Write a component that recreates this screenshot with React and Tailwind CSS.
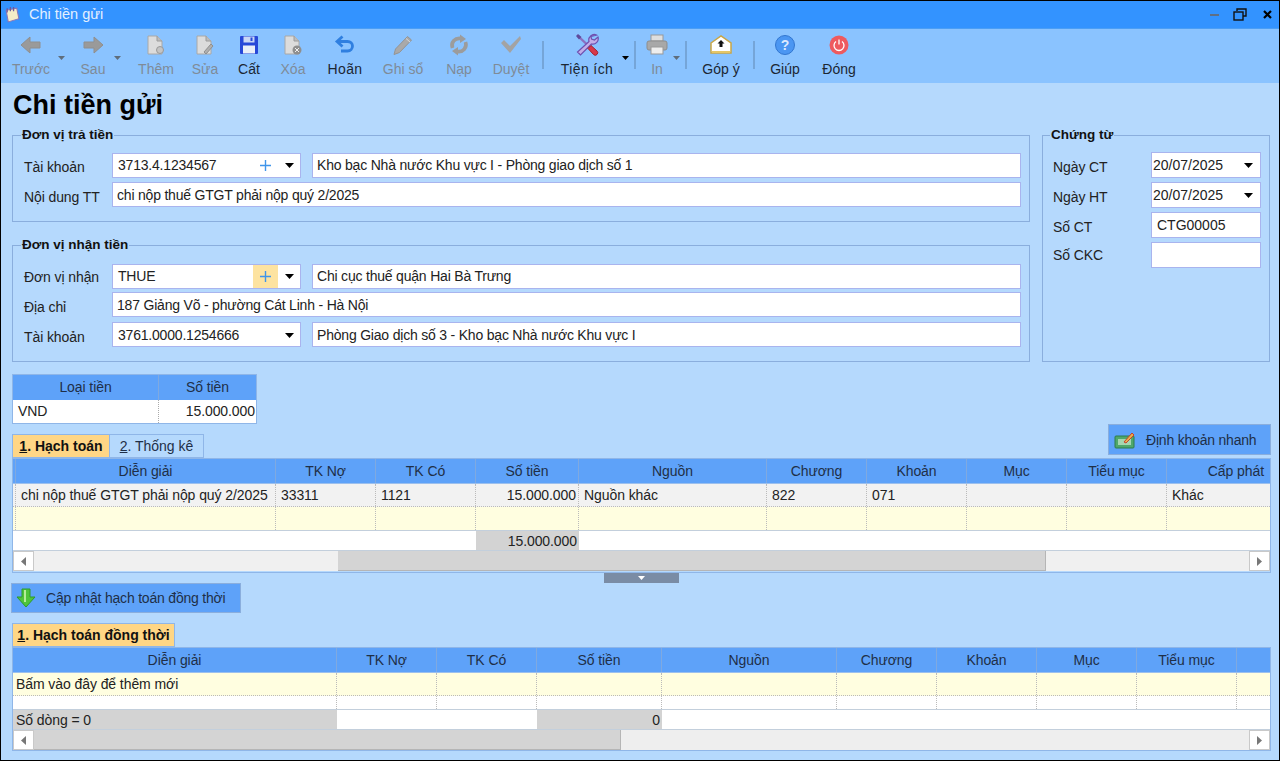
import React from 'react'

const FONT = "font-['Liberation_Sans',Arial,sans-serif]"

function CaretDown({ color = '#000', w = 9, h = 5 }) {
  return (
    <svg width={w} height={h} viewBox="0 0 9 5" preserveAspectRatio="none">
      <path d="M0 0h9L4.500 5z" fill={color} />
    </svg>
  )
}

function IconBack() {
  return (
    <svg width="22" height="20" viewBox="0 0 22 20">
      <path d="M1 10 10 2v5h10v6H10v5z" fill="#9a9a9a" stroke="#8f8f8f" />
    </svg>
  )
}

function IconForward() {
  return (
    <svg width="22" height="20" viewBox="0 0 22 20">
      <path d="M21 10 12 2v5H2v6h10v5z" fill="#9a9a9a" stroke="#8f8f8f" />
    </svg>
  )
}

function PageBase({ children }) {
  return (
    <svg width="22" height="22" viewBox="0 0 22 22">
      <path d="M3 2h9l5 5v13H3z" fill="#dcdcdc" stroke="#a8a8a8" />
      <path d="M12 2v5h5" fill="#bdbdbd" stroke="#9c9c9c" />
      {children}
    </svg>
  )
}

function IconSave() {
  return (
    <svg width="20" height="20" viewBox="0 0 20 20">
      <rect x="1" y="1" width="18" height="18" rx="1" fill="#2748d8" />
      <rect x="4.500" y="1.500" width="11" height="6" fill="#c9d6f5" />
      <rect x="11.500" y="2.500" width="2" height="3.500" fill="#2748d8" />
      <rect x="4" y="10.500" width="12" height="8" fill="#e9eef8" />
    </svg>
  )
}

function IconUndo() {
  return (
    <svg width="22" height="20" viewBox="0 0 22 20">
      <path d="M8.500 1.500 3 6.500l5.500 5" fill="none" stroke="#2f7fe0" strokeWidth="2.800" />
      <path d="M3.500 6.500h10c3 0 5 2 5 4.500s-2 5-5 5H7" fill="none" stroke="#2f7fe0" strokeWidth="2.800" />
    </svg>
  )
}

function IconPencil() {
  return (
    <svg width="22" height="22" viewBox="0 0 22 22">
      <path d="M3.500 15 15.500 2.500l4 3.500L7.500 18.500 2 20.500z" fill="#a9a9a9" stroke="#949494" />
      <path d="M14 4.500 18 8" stroke="#d8d8d8" />
    </svg>
  )
}

function IconReload() {
  return (
    <svg width="22" height="22" viewBox="0 0 22 22">
      <path d="M4.500 14C2.500 8.500 7 3.500 13 4.500" fill="none" stroke="#9c9c9c" strokeWidth="3.600" />
      <path d="M12 0.500 18 5l-6 4z" fill="#9c9c9c" />
      <path d="M17.500 8c2 5.500-2.500 10.500-8.500 9.500" fill="none" stroke="#9c9c9c" strokeWidth="3.600" />
      <path d="M10 21.500 4 17l6-4z" fill="#9c9c9c" />
    </svg>
  )
}

function IconCheck() {
  return (
    <svg width="22" height="20" viewBox="0 0 22 20">
      <path d="M1 8 4 5l6 6L20 1l1 3L10 18z" fill="#a3a3a3" />
    </svg>
  )
}

function IconTools() {
  return (
    <svg width="24" height="24" viewBox="0 0 24 24">
      <path d="M3 3 20 19" stroke="#8b6fc0" strokeWidth="2.400" />
      <path d="M1 3 3 1l3.500 3-2.500 2.500z" fill="#5f4a9c" />
      <path d="M21.500 2a5.500 5.500 0 0 0-7.500 6.500L2.500 19l3 3 11-11a5.500 5.500 0 0 0 6.500-7l-3.500 3-3-1-.5-2.500z" fill="#c3aee8" stroke="#6d4fb0" strokeWidth="1.200" />
      <path d="M13 15.500 18.500 21.500a2.200 2.200 0 0 0 3.500-3.500L16 12.500z" fill="#d8384a" stroke="#a32030" />
    </svg>
  )
}

function IconPrinter() {
  return (
    <svg width="22" height="22" viewBox="0 0 22 22">
      <rect x="5" y="1" width="12" height="6" fill="#dedede" stroke="#999" />
      <rect x="1" y="7" width="20" height="9" rx="2" fill="#a8a8a8" stroke="#8d8d8d" />
      <rect x="5" y="13" width="12" height="7" fill="#eee" stroke="#999" />
    </svg>
  )
}

function IconMail() {
  return (
    <svg width="22" height="20" viewBox="0 0 22 20">
      <path d="M1 8 11 1l10 7v10H1z" fill="#fff" stroke="#c9a646" strokeWidth="1.500" />
      <path d="M11 5l3.500 3.500H12.500V12h-3V8.500H7.500z" fill="#111" />
      <rect x="2" y="16" width="18" height="2" fill="#e5c667" />
    </svg>
  )
}

function IconHelp() {
  return (
    <div className="w-[20px] h-[20px] rounded-full bg-[#4b96f2] border border-[#3276d0] text-[#dbe9ff] text-[14px] font-bold flex items-center justify-center leading-none">
      ?
    </div>
  )
}

function IconPower() {
  return (
    <svg width="20" height="20" viewBox="0 0 20 20">
      <circle cx="10" cy="10" r="9.500" fill="#ee5a5f" />
      <path d="M7 6.500a5 5 0 1 0 6 0" fill="none" stroke="#fff" strokeWidth="1.300" />
      <path d="M10 4.500v5" stroke="#fff" strokeWidth="1.300" />
    </svg>
  )
}

function IconPlus() {
  return (
    <svg width="11" height="11" viewBox="0 0 11 11">
      <path d="M4.800 0h1.400v11H4.800zM0 4.800h11v1.400H0z" fill="#3f95ea" />
    </svg>
  )
}

function ToolButton({ icon, label, active, wide, className }) {
  return (
    <div className={`flex flex-col items-center shrink-0 ${className}`}>
      <div className="h-[25px] flex items-center justify-center">{icon}</div>
      <span
        className={`mt-[4px] text-[14px] leading-[16px] whitespace-nowrap ${active ? 'text-[#1c2733]' : 'text-[#7f8b98]'} ${wide ? 'tracking-[0.4px]' : ''}`}
      >
        {label}
      </span>
    </div>
  )
}

function ToolCaret({ color = '#5f6d7c', className }) {
  return (
    <div className={`shrink-0 w-[9px] flex justify-center ${className}`}>
      <CaretDown color={color} w={7} h={4} />
    </div>
  )
}

function ToolSep({ className }) {
  return <div className={`shrink-0 w-[2px] h-[28px] mt-[9px] bg-[#75a5d8] ${className}`} />
}

function Field({ w, children, className = '' }) {
  return (
    <div className={`h-[25px] ${w} shrink-0 bg-white border border-[#a9b4ee] flex items-center text-[14px] tracking-[-0.2px] text-[#222] ${className}`}>
      {children}
    </div>
  )
}

function Combo({ value, plus, hot, className = '' }) {
  return (
    <Field w="w-[189px]" className={`pl-[5px] ${className}`}>
      <span className="flex-1">{value}</span>
      {plus && (
        <span className={`w-[25px] h-[23px] flex items-center justify-center ${hot ? 'bg-[#fde3a0]' : ''}`}>
          <IconPlus />
        </span>
      )}
      <span className="w-[22px] flex justify-center">
        <CaretDown />
      </span>
    </Field>
  )
}

function FormRow({ label, labelPad, className = '', children }) {
  return (
    <div className={`flex items-center h-[25px] ${className}`}>
      <span className={`w-[88px] shrink-0 text-[14px] tracking-[-0.1px] text-[#222] ${labelPad}`}>{label}</span>
      {children}
    </div>
  )
}

function Group({ title, className, legendClass, children }) {
  return (
    <fieldset className={`border border-[#8aaedd] ${className}`}>
      <legend className={`px-[1px] text-[13.500px] leading-[16px] font-bold text-[#111] ${legendClass}`}>{title}</legend>
      {children}
    </fieldset>
  )
}

const grid1Cols = [
  ['w-[3px]', ''],
  ['w-[260px]', 'Diễn giải'],
  ['w-[100px]', 'TK Nợ'],
  ['w-[100px]', 'TK Có'],
  ['w-[103px]', 'Số tiền'],
  ['w-[188px]', 'Nguồn'],
  ['w-[100px]', 'Chương'],
  ['w-[100px]', 'Khoản'],
  ['w-[100px]', 'Mục'],
  ['w-[100px]', 'Tiểu mục'],
  ['w-[103px]', 'Cấp phát'],
]

const grid1Row = ['', 'chi nộp thuế GTGT phải nộp quý 2/2025', '33311', '1121', '15.000.000', 'Nguồn khác', '822', '071', '', '', 'Khác']

const grid2Cols = [
  ['w-[324px]', 'Diễn giải'],
  ['w-[100px]', 'TK Nợ'],
  ['w-[100px]', 'TK Có'],
  ['w-[125px]', 'Số tiền'],
  ['w-[175px]', 'Nguồn'],
  ['w-[100px]', 'Chương'],
  ['w-[100px]', 'Khoản'],
  ['w-[100px]', 'Mục'],
  ['w-[100px]', 'Tiểu mục'],
  ['w-[33px]', ''],
]

function HeaderRow({ cols, endAlignLast }) {
  return (
    <div className="flex h-[25px] bg-[#5ea2f9] border-b border-[#9cc0ee]">
      {cols.map(([w, label], i) => (
        <div
          key={i}
          className={`${w} shrink-0 flex items-center pt-[1px] whitespace-nowrap text-[#1f2f47] border-r border-[#7fa9e0] last:border-r-0 ${
            endAlignLast && i === cols.length - 1 ? 'justify-end pr-[6px]' : 'justify-center'
          }`}
        >
          {label}
        </div>
      ))}
    </div>
  )
}

function ScrollBar({ before, thumb, track }) {
  return (
    <div className={`flex h-[21px] ${track} border-t border-[#c3cfdc]`}>
      <div className="w-[21px] shrink-0 bg-white border border-[#c9c9c9] flex items-center justify-center">
        <svg width="5" height="9" viewBox="0 0 5 9"><path d="M5 0v9L0 4.500z" fill="#777" /></svg>
      </div>
      <div className={`${before} shrink-0`} />
      <div className={`${thumb} shrink-0 bg-[#d4d4d4] border-r border-b border-[#b5b5b5]`} />
      <div className="flex-1" />
      <div className="w-[21px] shrink-0 bg-white border border-[#c9c9c9] flex items-center justify-center">
        <svg width="5" height="9" viewBox="0 0 5 9"><path d="M0 0v9l5-4.500z" fill="#777" /></svg>
      </div>
    </div>
  )
}

function ActionButton({ icon, label, className }) {
  return (
    <div className={`flex items-center bg-[#5ea2f9] border border-[#8aaedd] text-[14px] tracking-[-0.2px] text-[#1f2f47] whitespace-nowrap ${className}`}>
      {icon}
      <span className="pt-[1px]">{label}</span>
    </div>
  )
}

function App() {
  return (
    <div className={`${FONT} w-[1280px] h-[761px] overflow-hidden flex flex-col border border-black bg-[#b5d9fd] text-[14px]`}>
      {/* Title bar */}
      <div className="h-[28px] shrink-0 bg-[#3393ff] flex items-center pl-[4px] border-b border-[#4b9ef5]">
        <svg width="15" height="17" viewBox="0 0 14 16">
          <path d="M1 4 11 2l2 10-10 3z" fill="#f5edc8" stroke="#8a76b8" />
          <path d="M2 2v4M5 1v4M8 1v4" stroke="#6d5a9c" strokeWidth="1.200" />
        </svg>
        <span className="ml-[9px] pt-[1px] text-[14.500px] text-[#e3f0ff]">Chi tiền gửi</span>
        <div className="ml-auto flex items-center">
          <div className="w-[9px] h-[2px] bg-[#5f6f85]" />
          <svg className="ml-[14px]" width="14" height="13" viewBox="0 0 14 13">
            <path d="M4 3V1h9v7h-3" fill="none" stroke="#111" strokeWidth="1.400" />
            <rect x="1" y="4" width="9" height="8" fill="none" stroke="#111" strokeWidth="1.400" />
          </svg>
          <svg className="ml-[16px] mr-[7px]" width="9" height="9" viewBox="0 0 9 9">
            <path d="M1 1l7 7M8 1 1 8" stroke="#000" strokeWidth="2.200" />
          </svg>
        </div>
      </div>

      {/* Toolbar */}
      <div className="h-[54px] shrink-0 bg-[#8ac3ff] flex items-start pt-[3px] pl-[5px]">
        <ToolButton className="w-[50px]" icon={<IconBack />} label="Trước" />
        <ToolCaret className="mt-[24px] ml-[1px]" />
        <ToolButton className="w-[40px] ml-[7px]" icon={<IconForward />} label="Sau" />
        <ToolCaret className="mt-[24px]" />
        <ToolButton className="w-[40px] ml-[14px]" icon={<PageBase><circle cx="15" cy="16" r="3.500" fill="#c4c4c4" stroke="#999" /></PageBase>} label="Thêm" />
        <ToolButton className="w-[40px] ml-[9px]" icon={<PageBase><path d="M10 18 17 10l2 2-7 8z" fill="#b0b0b0" stroke="#8f8f8f" /></PageBase>} label="Sửa" />
        <ToolButton className="w-[40px] ml-[4px]" icon={<IconSave />} label="Cất" active />
        <ToolButton className="w-[40px] ml-[4px]" icon={<PageBase><circle cx="15" cy="16" r="4.500" fill="#8f8f8f" /><path d="M13 14l4 4M17 14l-4 4" stroke="#eee" /></PageBase>} label="Xóa" />
        <ToolButton className="w-[40px] ml-[12px]" icon={<IconUndo />} label="Hoãn" active wide />
        <ToolButton className="w-[40px] ml-[18px]" icon={<IconPencil />} label="Ghi sổ" />
        <ToolButton className="w-[40px] ml-[16px]" icon={<IconReload />} label="Nạp" />
        <ToolButton className="w-[40px] ml-[12px]" icon={<IconCheck />} label="Duyệt" />
        <ToolSep className="ml-[11px]" />
        <ToolButton className="w-[50px] ml-[18px]" icon={<IconTools />} label="Tiện ích" active wide />
        <ToolCaret color="#000" className="mt-[24px] ml-[9px]" />
        <ToolSep className="ml-[4px]" />
        <ToolButton className="w-[24px] ml-[9px]" icon={<IconPrinter />} label="In" />
        <ToolCaret className="mt-[24px] ml-[3px]" />
        <ToolSep className="ml-[4px]" />
        <ToolButton className="w-[40px] ml-[14px]" icon={<IconMail />} label="Góp ý" active />
        <ToolSep className="ml-[12px]" />
        <ToolButton className="w-[40px] ml-[10px]" icon={<IconHelp />} label="Giúp" active />
        <ToolButton className="w-[40px] ml-[14px]" icon={<IconPower />} label="Đóng" active />
      </div>

      {/* Content */}
      <div className="flex-1 flex flex-col pl-[11px] pr-[8px]">
        <h1 className="h-[44px] pl-[1px] pt-[7px] text-[27px] leading-[30px] font-bold text-[#000]">Chi tiền gửi</h1>

        <div className="flex">
          <div className="w-[1018px] shrink-0">
            <Group title="Đơn vị trả tiền" legendClass="-ml-[3px]" className="h-[95px] pl-[11px] pt-[10px]">
              <FormRow label="Tài khoản" labelPad="pt-[4px]" className="mb-[4px]">
                <Combo value="3713.4.1234567" plus />
                <Field w="w-[709px]" className="ml-[11px] pl-[4px]">Kho bạc Nhà nước Khu vực I - Phòng giao dịch số 1</Field>
              </FormRow>
              <FormRow label="Nội dung TT" labelPad="pt-[6px]">
                <Field w="w-[909px]" className="pl-[4px] pt-[2px]">chi nộp thuế GTGT phải nộp quý 2/2025</Field>
              </FormRow>
            </Group>
            <Group title="Đơn vị nhận tiền" legendClass="-ml-[3px]" className="h-[125px] mt-[15px] pl-[11px] pt-[11px]">
              <FormRow label="Đơn vị nhận" labelPad="pt-[2px]" className="mb-[3px]">
                <Combo value="THUE" plus hot />
                <Field w="w-[709px]" className="ml-[11px] pl-[4px]">Chi cục thuế quận Hai Bà Trưng</Field>
              </FormRow>
              <FormRow label="Địa chỉ" labelPad="pt-[6px]" className="mb-[5px]">
                <Field w="w-[909px]" className="pl-[4px] pt-[1px]">187 Giảng Võ - phường Cát Linh - Hà Nội</Field>
              </FormRow>
              <FormRow label="Tài khoản" labelPad="pt-[6px]">
                <Combo value="3761.0000.1254666" className="pt-[2px]" />
                <Field w="w-[709px]" className="ml-[11px] pl-[4px] pt-[2px]">Phòng Giao dịch số 3 - Kho bạc Nhà nước Khu vực I</Field>
              </FormRow>
            </Group>
          </div>

          <Group title="Chứng từ" legendClass="-ml-[3px]" className="w-[228px] h-[235px] ml-[12px] pl-[10px] pt-[9px]">
            {[
              ['Ngày CT', '20/07/2025', true, 'pt-[5px]'],
              ['Ngày HT', '20/07/2025', true, 'pt-[5px]'],
              ['Số CT', 'CTG00005', false, 'pt-[5px]'],
              ['Số CKC', '', false, 'pt-[1px]'],
            ].map(([label, value, drop, pad]) => (
              <div key={label} className="flex items-center h-[26px] mb-[4px]">
                <span className={`w-[98px] shrink-0 text-[14px] tracking-[-0.1px] text-[#222] ${pad}`}>{label}</span>
                <Field w="w-[110px]" className={`h-[26px] ${drop ? 'pl-[1px]' : 'pl-[5px]'}`}>
                  <span className="flex-1 tracking-normal">{value}</span>
                  {drop && <span className="w-[24px] flex justify-center"><CaretDown /></span>}
                </Field>
              </div>
            ))}
          </Group>
        </div>

        {/* Currency */}
        <div className="w-[245px] h-[50px] mt-[12px] border border-[#8fb6e8] shrink-0 tracking-[-0.08px]">
          <div className="flex h-[25px] bg-[#5ea2f9] text-[#1f2f47]">
            <div className="w-[146px] flex items-center justify-center border-r border-[#7fa9e0]">Loại tiền</div>
            <div className="flex-1 flex items-center justify-center">Số tiền</div>
          </div>
          <div className="flex h-[23px] bg-white text-[#222]">
            <div className="w-[146px] pl-[5px] flex items-center border-r border-dotted border-[#aaa]">VND</div>
            <div className="flex-1 pr-[1px] flex items-center justify-end">15.000.000</div>
          </div>
        </div>

        {/* Grid 1 */}
        <div className="flex items-start h-[34px] shrink-0 w-[1259px]">
          <div className="flex mt-[10px] h-[24px] items-stretch">
            <div className="w-[98px] bg-[#ffd685] border border-[#8fb6e8] flex items-center justify-center font-bold text-[#111]">
              <span><span className="underline">1</span>. Hạch toán</span>
            </div>
            <div className="w-[94px] border-y border-r border-[#8fb6e8] flex items-center justify-center text-[#1f2f47]">
              <span><span className="underline">2</span>. Thống kê</span>
            </div>
          </div>
          <ActionButton
            className="ml-auto w-[163px] h-[31px] pl-[5px]"
            label="Định khoản nhanh"
            icon={
              <svg className="mr-[10px]" width="22" height="18" viewBox="0 0 22 18">
                <rect x="1" y="5" width="19" height="12" rx="1" fill="#4fa86b" stroke="#2d7d4c" />
                <rect x="4" y="8" width="13" height="6" fill="#a5d6b0" />
                <path d="M10 11 18 2l2 2-8 8z" fill="#e8b04a" stroke="#c6402e" />
              </svg>
            }
          />
        </div>

        <div className="w-[1259px] h-[115px] shrink-0 border border-[#8fb6e8] tracking-[-0.08px] text-[#222]">
          <HeaderRow cols={grid1Cols} endAlignLast />
          <div className="flex h-[23px] bg-[#f2f2f2] border-b border-dotted border-[#bbb]">
            {grid1Cols.map(([w], i) => (
              <div
                key={i}
                className={`${w} shrink-0 flex items-center pt-[1px] whitespace-nowrap overflow-hidden border-r border-dotted border-[#bbb] last:border-r-0 ${
                  i === 0 ? '' : i === 4 ? 'justify-end pr-[2px]' : 'pl-[5px]'
                }`}
              >
                {grid1Row[i]}
              </div>
            ))}
          </div>
          <div className="flex h-[24px] bg-[#fffee0] border-b border-[#c3cfdc]">
            {grid1Cols.map(([w], i) => (
              <div key={i} className={`${w} shrink-0 border-r border-dotted border-[#bbb] last:border-r-0`} />
            ))}
          </div>
          <div className="flex h-[19px] bg-white">
            <div className="w-[463px] shrink-0" />
            <div className="w-[103px] shrink-0 bg-[#d3d3d3] flex items-center justify-end pr-[2px] pt-[1px]">15.000.000</div>
          </div>
          <ScrollBar track="bg-[#f0f0f0]" before="w-[304px]" thumb="w-[708px]" />
        </div>

        {/* Splitter */}
        <div className="h-[10px] shrink-0 w-[1259px] flex justify-center">
          <div className="w-[75px] h-full bg-[#7a8ca5] flex items-center justify-center">
            <svg width="7" height="4" viewBox="0 0 7 4"><path d="M0 0h7L3.500 4z" fill="#fff" /></svg>
          </div>
        </div>

        <ActionButton
          className="w-[230px] h-[30px] shrink-0 -ml-[1px] pl-[4px]"
          label="Cập nhật hạch toán đồng thời"
          icon={
            <svg className="mr-[10px]" width="20" height="20" viewBox="0 0 20 20">
              <path d="M6 1h8v8h5l-9 10L1 9h5z" fill="#4fc43a" stroke="#2f9a2c" />
              <path d="M8 2h2v12H8z" fill="#b5ec9a" />
            </svg>
          }
        />

        {/* Grid 2 */}
        <div className="mt-[10px] w-[163px] h-[24px] shrink-0 bg-[#ffd685] border border-[#8fb6e8] flex items-center justify-center font-bold text-[#111]">
          <span><span className="underline">1</span>. Hạch toán đồng thời</span>
        </div>
        <div className="w-[1259px] h-[104px] shrink-0 border border-[#8fb6e8] tracking-[-0.08px] text-[#222]">
          <HeaderRow cols={grid2Cols} />
          <div className="flex h-[23px] bg-[#fffee0] border-b border-dotted border-[#bbb]">
            {grid2Cols.map(([w], i) => (
              <div key={i} className={`${w} shrink-0 flex items-center pl-[3px] pt-[1px] whitespace-nowrap border-r border-dotted border-[#bbb] last:border-r-0`}>
                {i === 0 ? 'Bấm vào đây để thêm mới' : ''}
              </div>
            ))}
          </div>
          <div className="flex h-[14px] bg-white border-b border-[#c3cfdc]">
            {grid2Cols.map(([w], i) => (
              <div key={i} className={`${w} shrink-0 border-r border-dotted border-[#bbb] last:border-r-0`} />
            ))}
          </div>
          <div className="flex h-[19px] bg-white">
            <div className="w-[324px] shrink-0 bg-[#d3d3d3] pl-[3px] pt-[1px] flex items-center">Số dòng = 0</div>
            <div className="w-[200px] shrink-0" />
            <div className="w-[125px] shrink-0 bg-[#d3d3d3] flex items-center justify-end pr-[2px] pt-[1px]">0</div>
          </div>
          <ScrollBar track="bg-[#eeeeee]" before="w-0" thumb="w-[587px]" />
        </div>
      </div>
    </div>
  )
}

export default App
